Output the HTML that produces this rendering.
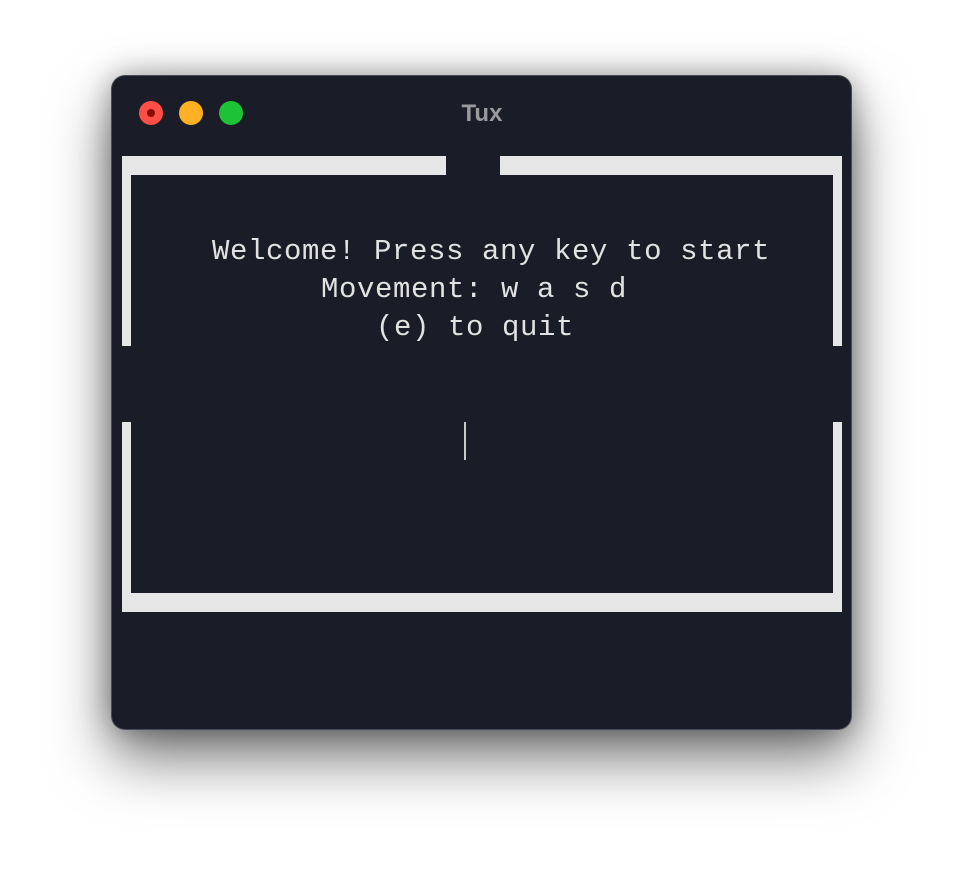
<!DOCTYPE html>
<html><head><meta charset="utf-8"><style>
html,body{margin:0;padding:0;width:964px;height:878px;background:#fff;overflow:hidden;position:relative}
.win{position:absolute;left:112px;top:76px;width:739px;height:653px;background:#1a1c27;border-radius:13px;box-shadow:0 0 0 1px #4a4c55,0 28px 60px rgba(0,0,0,.55),0 0 30px rgba(0,0,0,.35)}
.d{position:absolute;top:101px;width:24px;height:24px;border-radius:50%}
.b{position:absolute;background:#e7e6e6}
.t{position:absolute;font-family:"Liberation Mono",monospace;font-size:29px;letter-spacing:0.6px;color:#e2e2e2;white-space:pre;line-height:38px}
.title{position:absolute;top:100px;left:0;width:964px;text-align:center;font-family:"Liberation Sans",sans-serif;font-weight:bold;font-size:24px;color:#9a9a9e}
</style></head><body>
<div class="win"></div>
<div class="d" style="left:139px;background:#fe4f47"></div>
<div style="position:absolute;left:147px;top:109px;width:8px;height:8px;border-radius:50%;background:#8b0a06"></div>
<div class="d" style="left:179px;background:#fdb123"></div>
<div class="d" style="left:219px;background:#1dc235"></div>
<div class="title">Tux</div>
<div class="b" style="left:122px;top:156px;width:324px;height:19px"></div>
<div class="b" style="left:500px;top:156px;width:342px;height:19px"></div>
<div class="b" style="left:122px;top:156px;width:9px;height:190px"></div>
<div class="b" style="left:122px;top:422px;width:9px;height:190px"></div>
<div class="b" style="left:833px;top:156px;width:9px;height:190px"></div>
<div class="b" style="left:833px;top:422px;width:9px;height:190px"></div>
<div class="b" style="left:122px;top:593px;width:720px;height:19px"></div>
<div class="t" style="left:212px;top:233px">Welcome! Press any key to start</div>
<div class="t" style="left:321px;top:271px">Movement: w a s d</div>
<div class="t" style="left:376px;top:309px">(e) to quit</div>
<div style="position:absolute;left:464px;top:422px;width:2px;height:38px;background:#c8c8c8"></div>
</body></html>
